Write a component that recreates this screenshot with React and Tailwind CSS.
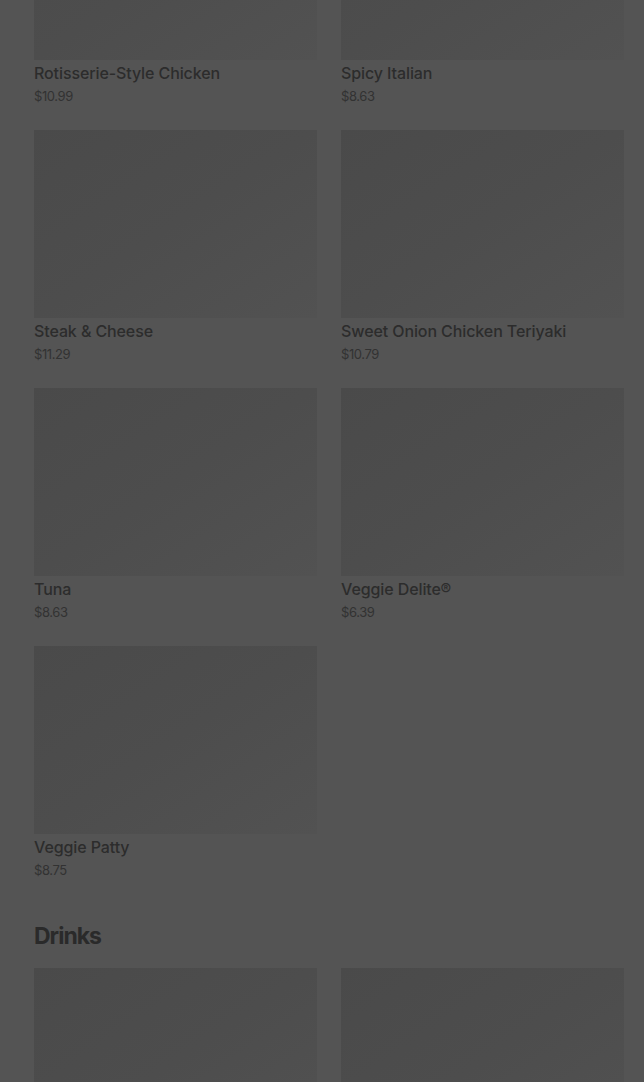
import React from "react";

const sandwiches = [
  { name: "Rotisserie-Style Chicken", price: "$10.99" },
  { name: "Spicy Italian", price: "$8.63" },
  { name: "Steak & Cheese", price: "$11.29" },
  { name: "Sweet Onion Chicken Teriyaki", price: "$10.79" },
  { name: "Tuna", price: "$8.63" },
  { name: "Veggie Delite®", price: "$6.39" },
  { name: "Veggie Patty", price: "$8.75" },
];

const MenuCard = ({ item }) => (
  <div className="flex flex-col">
    <div className="h-[188px] w-full bg-gradient-to-br from-[#4a4a4a] via-[#4d4d4d] to-[#525252]" />
    <h3 className="mt-[1px] text-[16px] leading-6 font-medium text-[#2c2c2c] tracking-[-0.1px]">
      {item.name}
    </h3>
    <p className="mt-[1px] text-[13px] leading-5 text-[#323232] tracking-[-0.4px]">{item.price}</p>
  </div>
);

const App = () => {
  return (
    <div
      className="h-screen overflow-hidden bg-[#545454]"
      style={{ fontFamily: "Inter, Roboto, 'Liberation Sans', sans-serif" }}
    >
      <div className="-mt-[128px] pl-[34px] pr-[20px]">
        {/* Sandwiches */}
        <div className="grid grid-cols-2 gap-x-6 gap-y-6">
          {sandwiches.map((item) => (
            <MenuCard key={item.name} item={item} />
          ))}
        </div>

        {/* Drinks */}
        <h2 className="mt-[40px] mb-4 text-[23px] leading-8 font-bold text-[#2a2a2a] tracking-[-1px]">
          Drinks
        </h2>
        <div className="grid grid-cols-2 gap-x-6 gap-y-6">
          <div className="h-[188px] w-full bg-gradient-to-br from-[#4a4a4a] via-[#4d4d4d] to-[#525252]" />
          <div className="h-[188px] w-full bg-gradient-to-br from-[#4a4a4a] via-[#4d4d4d] to-[#525252]" />
        </div>
      </div>
    </div>
  );
};

export default App;
